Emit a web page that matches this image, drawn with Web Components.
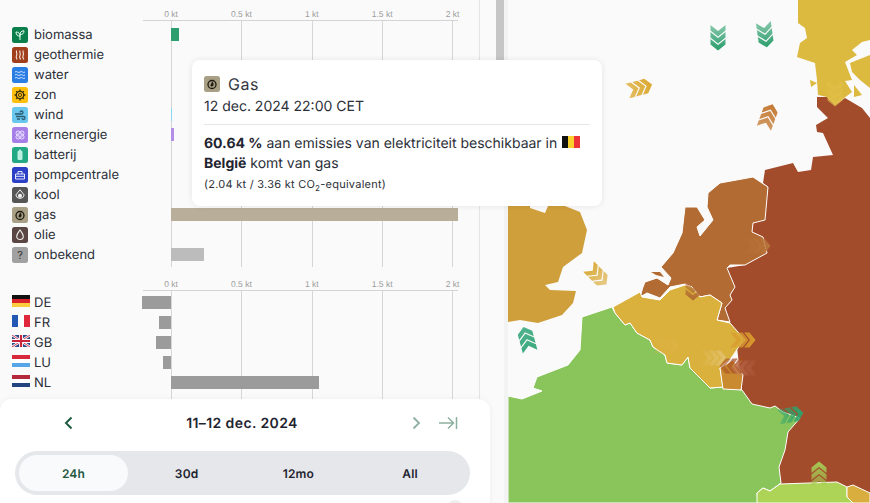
<!DOCTYPE html>
<html lang="nl">
<head>
<meta charset="utf-8">
<title>Emissies</title>
<style>
html,body{margin:0;padding:0;height:503px;overflow:hidden;background:#fafafa;font-family:Inter,"Liberation Sans",sans-serif;color:#1f2430;text-rendering:geometricPrecision}
</style>
</head>
<body>
<app-shell>
  <side-panel>
    <emission-chart pad="4">
      <chart-row pos="8" color="#2f9e6e"><source-icon kind="biomassa"></source-icon>biomassa</chart-row>
      <chart-row><source-icon kind="geothermie"></source-icon>geothermie</chart-row>
      <chart-row><source-icon kind="water"></source-icon>water</chart-row>
      <chart-row><source-icon kind="zon"></source-icon>zon</chart-row>
      <chart-row pos="1" color="#8fd6f3"><source-icon kind="wind"></source-icon>wind</chart-row>
      <chart-row pos="3" color="#b38fe8"><source-icon kind="kernenergie"></source-icon>kernenergie</chart-row>
      <chart-row><source-icon kind="batterij"></source-icon>batterij</chart-row>
      <chart-row><source-icon kind="pompcentrale"></source-icon>pompcentrale</chart-row>
      <chart-row><source-icon kind="kool"></source-icon>kool</chart-row>
      <chart-row pos="287" color="#b9ae99"><source-icon kind="gas"></source-icon>gas</chart-row>
      <chart-row><source-icon kind="olie"></source-icon>olie</chart-row>
      <chart-row pos="33" color="#bcbcbc"><source-icon kind="onbekend"></source-icon>onbekend</chart-row>
    </emission-chart>
    <emission-chart pad="2" tail="40" style="margin-top:12px">
      <chart-row neg="29" color="#9b9b9b"><flag-icon code="de"></flag-icon>DE</chart-row>
      <chart-row neg="12" color="#9b9b9b"><flag-icon code="fr"></flag-icon>FR</chart-row>
      <chart-row neg="15" color="#9b9b9b"><flag-icon code="gb"></flag-icon>GB</chart-row>
      <chart-row neg="8" color="#9b9b9b"><flag-icon code="lu"></flag-icon>LU</chart-row>
      <chart-row pos="148" color="#9b9b9b"><flag-icon code="nl"></flag-icon>NL</chart-row>
    </emission-chart>
  </side-panel>
  <zone-map></zone-map>
  <zone-tooltip></zone-tooltip>
  <time-controller></time-controller>
</app-shell>

<script>
class Base extends HTMLElement{
  constructor(){super();this.attachShadow({mode:'open'});}
}
class AppShell extends Base{
  connectedCallback(){this.shadowRoot.innerHTML=`<style>
    :host{display:grid;grid-template-columns:504px 366px;position:relative;width:870px;height:503px;overflow:hidden}
  </style><slot></slot>`;}
}
class SidePanel extends Base{
  connectedCallback(){this.shadowRoot.innerHTML=`<style>
    :host{display:flex;height:503px;background:#fafafa;position:relative;z-index:1;overflow:hidden;font-size:13px}
    .content{box-sizing:border-box;width:480px;flex:none;border-right:1px solid #e4e4e4;padding-top:9px}
    .gutter{flex:none;width:16px}
    .thumb{flex:none;width:8px;height:170px;background:#c6c6c6}
  </style><div class="content"><slot></slot></div><div class="gutter"></div><div class="thumb"></div>`;}
}
class EmissionChart extends Base{
  connectedCallback(){
    const pad=this.getAttribute('pad')||0,tail=this.getAttribute('tail')||2;
    const xs=[171,241,312,382,452];
    const bg=xs.map(x=>`linear-gradient(#d6d6d6,#d6d6d6) ${x}px 0/1px 100% no-repeat`).join(',');
    this.shadowRoot.innerHTML=`<style>
    :host{display:block}
    .axis{margin-left:143px;width:315px;height:11px;border-bottom:1px solid #d4d4d4;display:flex;box-sizing:content-box}
    .ticks{display:flex;margin-left:-7.2px}
    .ticks span{flex:none;width:70.4px;text-align:center;font:8.5px/11px "Liberation Sans",sans-serif;color:#9a9a9a;white-space:nowrap}
    .body{padding-top:${pad}px;padding-bottom:${tail}px;background:${bg}}
    </style>
    <div class="axis"><div class="ticks"><span>0 kt</span><span>0.5 kt</span><span>1 kt</span><span>1.5 kt</span><span>2 kt</span></div></div>
    <div class="body"><slot></slot></div>`;
  }
}
class ChartRow extends Base{
  connectedCallback(){
    const neg=this.getAttribute('neg'),pos=this.getAttribute('pos'),c=this.getAttribute('color')||'transparent';
    this.shadowRoot.innerHTML=`<style>
    :host{display:grid;grid-template-columns:130px 29px 1fr;height:20px;padding-left:12px;color:#2b2f38}
    .label{display:flex;align-items:center;gap:6px;white-space:nowrap;height:20px;line-height:20px}
    ::slotted(flag-icon){margin-bottom:4px;margin-right:-2px}
    .neg{display:flex;justify-content:flex-end}
    .bar{height:13px;margin-top:3px;background:${c}}
    </style>
    <div class="label"><slot></slot></div>
    <div class="neg">${neg?`<div class="bar" style="width:${neg}px"></div>`:''}</div>
    <div>${pos?`<div class="bar" style="width:${pos}px"></div>`:''}</div>`;
  }
}
const ICONS={
 biomassa:['#0b7f4b','<path d="M8 13V7.5M8 9.2C5.6 9.2 4 7.8 4 5c2.6 0 4 1.4 4 4.2ZM8 7.6c0-2.4 1.4-3.8 4-3.8 0 2.6-1.4 3.8-4 3.8Z" fill="none" stroke="#e8fff2" stroke-width="1"/>'],
 geothermie:['#a13f1d','<path d="M4.6 3.5c-1 2 1.4 3-.2 5.200-.5.9-.3 2 .6 3.800M8 3.500c-1 2 1.400 3-.2 5.200-.5.9-.3 2 .8 3.800M11.200 3.500c-1 2 1.400 3-.2 5.200-.5.9-.3 2 .8 3.800" fill="none" stroke="#f6e6dc" stroke-width="1.100"/>'],
 water:['#2a7ee3','<path d="M3 5q1.250-1 2.500 0t2.500 0 2.500 0 2.500 0M3 8q1.250-1 2.500 0t2.500 0 2.500 0 2.500 0M3 11q1.250-1 2.500 0t2.500 0 2.500 0 2.500 0" fill="none" stroke="#cfe4ff" stroke-width="1"/>'],
 zon:['#fdbf0e','<circle cx="8" cy="8" r="3.700" fill="none" stroke="#3a2f10" stroke-width="1.300"/><circle cx="8" cy="8" r="1.600" fill="none" stroke="#3a2f10" stroke-width=".9"/><path d="M8 2.600v1.700M8 11.700v1.700M2.600 8h1.700M11.700 8h1.700M4.200 4.200l1.200 1.200M10.600 10.600l1.200 1.200M4.200 11.800l1.200-1.200M10.600 5.400l1.200-1.200" stroke="#3a2f10" stroke-width="1.300"/>'],
 wind:['#69c7ef','<path d="M3 7h6.500a1.500 1.500 0 1 0-1.500-1.500M4 9.500h7.500a1.500 1.500 0 1 1-1.500 1.500M5 12h3" fill="none" stroke="#2c5a70" stroke-width="1.300"/>'],
 kernenergie:['#a67ee8','<g fill="none" stroke="#eadfff" stroke-width=".9"><ellipse cx="8" cy="8" rx="5" ry="2.600" transform="rotate(45 8 8)"/><ellipse cx="8" cy="8" rx="5" ry="2.600" transform="rotate(-45 8 8)"/><circle cx="8" cy="8" r="1.500"/></g>'],
 batterij:['#22a885','<rect x="5.500" y="3.800" width="5" height="9.200" rx="1.200" fill="#bdeee0"/><rect x="7" y="2.600" width="2" height="1.400" fill="#bdeee0"/>'],
 pompcentrale:['#2c3fc5','<path d="M3.500 7h9v5h-9zM3.500 9.300h9M6 7V4.500h4V7" fill="none" stroke="#e3e7ff" stroke-width="1"/>'],
 kool:['#565656','<path d="M8 2.800 12.200 8a4.300 4.300 0 0 1-8.400 0Z" fill="none" stroke="#f0f0f0" stroke-width="1"/><circle cx="8" cy="8.800" r="2" fill="#f4f4f4"/>'],
 gas:['#a89f84','<circle cx="8" cy="8.500" r="4" fill="none" stroke="#1d1a12" stroke-width="1.300"/><path d="M8 5.500c1.800 1.300 2 3 1.200 4.300a1.700 1.700 0 0 1-2.700-.3C6 8.500 8 7.500 8 5.500Z" fill="#1d1a12"/><path d="M6 3.800l1 1M10 3.800l-1 1" stroke="#1d1a12" stroke-width="1"/>'],
 olie:['#5a4642','<path d="M8 3c1.800 2.600 3.300 4.200 3.300 6.200a3.300 3.300 0 0 1-6.600 0C4.700 7.200 6.200 5.600 8 3Z" fill="none" stroke="#f2eeee" stroke-width="1.100"/>'],
 onbekend:['#a1a1a1','<text x="8" y="12" text-anchor="middle" font-family="Inter,Liberation Sans,sans-serif" font-size="11" fill="#333">?</text>']
};
class SourceIcon extends Base{
  connectedCallback(){
    const [bg,g]=ICONS[this.getAttribute('kind')];
    this.shadowRoot.innerHTML=`<style>:host{display:block;flex:none;width:16px;height:16px;line-height:0}svg{display:block}</style>
    <svg width="16" height="16" viewBox="0 0 16 16"><rect width="16" height="16" rx="2.500" fill="${bg}"/>${g}</svg>`;
  }
}
const stripes=(a,vert)=>a.map((c,i)=>vert?`<rect x="${i*6}" width="6" height="12" fill="${c}"/>`:`<rect y="${i*4}" width="18" height="4" fill="${c}"/>`).join('');
const FLAGS={
 de:stripes(['#111','#d8232a','#fcce3f']),
 nl:stripes(['#b5293c','#ffffff','#23447e']),
 lu:stripes(['#d8293c','#ffffff','#56a6e8']),
 fr:stripes(['#2358b3','#ffffff','#e0283d'],1),
 be:stripes(['#111','#fad02c','#ee3338'],1),
 gb:`<rect width="18" height="12" fill="#2a4a8c"/><path d="M0 0 18 12M18 0 0 12" stroke="#fff" stroke-width="2.400"/><path d="M0 0 18 12M18 0 0 12" stroke="#c8243c" stroke-width=".9"/><path d="M9 0v12M0 6h18" stroke="#fff" stroke-width="4"/><path d="M9 0v12M0 6h18" stroke="#c8243c" stroke-width="2.200"/>`
};
class FlagIcon extends Base{
  connectedCallback(){
    this.shadowRoot.innerHTML=`<style>:host{display:inline-block;flex:none;width:18px;height:12px;line-height:0}svg{display:block}</style>
    <svg width="18" height="12" viewBox="0 0 18 12">${FLAGS[this.getAttribute('code')]}</svg>`;
  }
}
const SHAPES=[
 // Germany
 ['#a34c2b','none','817,97 827,97 835,105 845,98 862,108 870,118 870,503 781,503 781,483 760,420 742,390 735,330 722,310 727,268 745,265 750,225 763,215 768,187 763,183 765,170 793,163 798,172 811,170 813,157 833,155 823,133 817,132 816,125 828,118 817,107'],
 // Denmark
 ['#dcb93f','none','798,0 870,0 870,40 862,42 852,50 857,55 845,62 852,80 845,81 852,92 835,105 827,97 818,95 817,80 815,63 797,57 800,43 807,38 805,28 798,23'],
 ['#dcb93f','none','850,63 870,55 870,88 860,80 852,72'],
 ['#dcb93f','none','854,85 862,95 854,97'],
 ['#dcb93f','none','810,80 817,83 811,87'],
 // UK
 ['#cf9f3b','none','508,200 530,200 530,208 545,213 548,206 565,206 580,212 587,230 582,253 563,267 558,282 545,285 550,290 576,291 573,303 562,315 538,323 520,320 508,322'],
 // France
 ['#8ac55b','#fff','508,396 522,399 542,391 533,388 537,377 568,365 580,350 582,317 612,307 615,313 625,325 630,323 637,333 650,340 653,347 665,355 667,363 682,365 688,357 690,368 710,388 723,387 742,390 752,404 770,408 775,406 783,412 800,418 788,432 785,450 779,467 781,483 770,491 763,488 757,493 758,503 508,503'],
 // NL
 ['#b26b32','#fff','685,207 697,207 705,220 697,227 700,236 713,220 707,207 708,193 720,183 753,177 762,183 768,187 765,220 753,223 752,232 763,237 767,253 745,265 730,265 727,268 735,287 730,295 732,300 725,308 730,322 717,320 722,303 710,295 700,297 692,287 685,284 670,287 660,298 647,293 640,297 643,287 645,282 657,278 668,285 671,278 661,267 673,253 682,233'],
 ['#b26b32','none','651,272 660,272 664,277 656,275'],
 // Belgium
 ['#dab13c','#fff','613,307 640,292 642,297 660,300 670,290 685,285 692,287 700,297 710,295 722,303 717,320 730,323 745,340 740,345 732,357 720,368 723,387 710,388 690,368 688,357 682,365 667,363 665,355 653,347 650,340 637,333 630,323 625,325 615,313'],
 // Luxembourg
 ['#c98a30','#fff','720,368 733,360 743,375 741,390 723,389'],
 // Swiss
 ['#aed457','#fff','757,493 763,488 770,491 780,484 837,482 847,487 847,497 853,503 757,503'],
 ['#d9ae3e','#fff','847,487 853,485 870,493 870,503 853,503 847,497']
];
const ARROWS=[
 [718,37,0,'#2a9e6c',.55,1],[765,34,-8,'#2a9e6c',.55,1],[639,88,-105,'#dca92f',.75,1],[768,117,200,'#c47a34',.75,1],
 [835,93,0,'#e3c04a',.5,.7],[757,246,-90,'#b8743a',.25,1],[693,287,0,'#b26b32',.25,1],[597,275,-45,'#d9ab3a',1,.6],
 [527,340,165,'#26a070',.9,.8],[742,340,-90,'#d99a2d',.6,1],[665,346,-90,'#e2b24a',.15,.5],[713,358,-90,'#eccf9f',.05,.5],
 [733,366,90,'#a84f22',.9,.5],[745,368,90,'#c77c62',.1,.55],[790,415,-100,'#2ea36c',.4,1],[819,475,180,'#a5c953',.5,1]
];
class ZoneMap extends Base{
  connectedCallback(){
    const defs=ARROWS.map((a,i)=>`<linearGradient id="g${i}" gradientUnits="userSpaceOnUse" x1="0" y1="-12" x2="0" y2="13"><stop offset="0" stop-color="${a[3]}" stop-opacity="${a[4]}"/><stop offset="1" stop-color="${a[3]}" stop-opacity="${a[5]}"/></linearGradient>`).join('');
    const poly=SHAPES.map(s=>`<polygon points="${s[2]}" fill="${s[0]}" stroke="${s[1]}" stroke-width="1" stroke-linejoin="miter"/>`).join('');
    const chev=y=>`M-7.500,${y} L0,${y+6} L7.500,${y} L7.500,${y+5.500} L0,${y+11.500} L-7.500,${y+5.500}Z`;
    const d=chev(-12)+chev(-5)+chev(2);
    const arr=ARROWS.map((a,i)=>`<path transform="translate(${a[0]} ${a[1]}) rotate(${a[2]})" d="${d}" fill="url(#g${i})"/>`).join('');
    this.shadowRoot.innerHTML=`<style>
    :host{display:block;box-sizing:border-box;height:503px;border-left:4px solid #f3f3f3;background:#fafafa}
    svg{display:block}
    </style><svg width="362" height="503" viewBox="508 0 362 503"><defs>${defs}</defs>${poly}${arr}</svg>`;
  }
}
class ZoneTooltip extends Base{
  connectedCallback(){
    this.shadowRoot.innerHTML=`<style>
    :host{position:absolute;left:192px;top:60px;z-index:3;box-sizing:border-box;width:410px;height:146px;background:#fff;border-radius:8px;box-shadow:0 0 6px rgba(0,0,0,.09);padding:12px;font-size:14px;line-height:20px;color:#2b2f38}
    .head{display:flex;align-items:center;gap:8px;height:24px;font-size:16px;letter-spacing:.5px;color:#33373f}
    .date{height:20px;margin-top:1px}
    hr{border:0;border-top:1px solid #e6e6e6;margin:7px 0 9px}
    b{font-weight:700;color:#1f2430}
    .flag{vertical-align:-1px;margin-left:1px;transform:translateY(-1px)}
    .small{font-size:11px;line-height:16px;margin-top:2px;letter-spacing:.25px}
    sub{font-size:8px;line-height:0}
    </style>
    <div class="head"><source-icon kind="gas"></source-icon><span>Gas</span></div>
    <div class="date">12 dec. 2024 22:00 CET</div>
    <hr>
    <div><b>60.64 %</b> aan emissies van elektriciteit beschikbaar in <flag-icon class="flag" code="be"></flag-icon></div>
    <div><b>België</b> komt van gas</div>
    <div class="small">(2.04 kt / 3.36 kt CO<sub>2</sub>-equivalent)</div>`;
  }
}
class TimeController extends Base{
  connectedCallback(){
    this.shadowRoot.innerHTML=`<style>
    :host{position:absolute;left:0;top:399px;z-index:2;box-sizing:border-box;width:490px;height:130px;background:#fff;border-radius:12px 12px 0 0;padding:0 20px 0 15px;box-shadow:0 0 6px rgba(0,0,0,.05)}
    .nav{display:grid;grid-template-columns:108px 238px 39px 32px 32px;align-items:center;height:48px;margin-bottom:4px}
    .nav svg{display:block;margin:0 auto}
    .title{text-align:center;font-size:14px;font-weight:600;letter-spacing:.4px;color:#1f2430}
    .seg{display:grid;grid-template-columns:repeat(4,1fr);height:44px;box-sizing:border-box;padding:4px;background:#e5e7eb;border-radius:22px}
    .seg div{display:flex;align-items:center;justify-content:center;font-size:12px;font-weight:600;color:#1f2430;border-radius:18px;letter-spacing:.2px}
    .seg .on{background:#f9fafb;color:#24583f;width:109px}
    .dot{width:16px;height:16px;border-radius:50%;background:#eee;margin:5px 0 0 432px}
    </style>
    <div class="nav">
      <svg width="14" height="16" viewBox="0 0 14 16" style="margin-left:47px"><path d="M9.500 2.500 4 8l5.500 5.500" fill="none" stroke="#1f5c40" stroke-width="2"/></svg>
      <div class="title">11–12 dec. 2024</div>
      <span></span>
      <svg width="14" height="16" viewBox="0 0 14 16"><path d="M4.500 2.500 10 8l-5.500 5.500" fill="none" stroke="#8fb0a0" stroke-width="1.800"/></svg>
      <svg width="20" height="16" viewBox="0 0 20 16"><path d="M1 8h14M10 2.500 15.500 8 10 13.500M18.500 2v12" fill="none" stroke="#8fb0a0" stroke-width="1.500"/></svg>
    </div>
    <div class="seg"><div class="on">24h</div><div>30d</div><div>12mo</div><div>All</div></div>
    <div class="dot"></div>`;
  }
}
customElements.define('app-shell',AppShell);
customElements.define('side-panel',SidePanel);
customElements.define('emission-chart',EmissionChart);
customElements.define('chart-row',ChartRow);
customElements.define('source-icon',SourceIcon);
customElements.define('flag-icon',FlagIcon);
customElements.define('zone-map',ZoneMap);
customElements.define('zone-tooltip',ZoneTooltip);
customElements.define('time-controller',TimeController);
</script>
</body>
</html>
